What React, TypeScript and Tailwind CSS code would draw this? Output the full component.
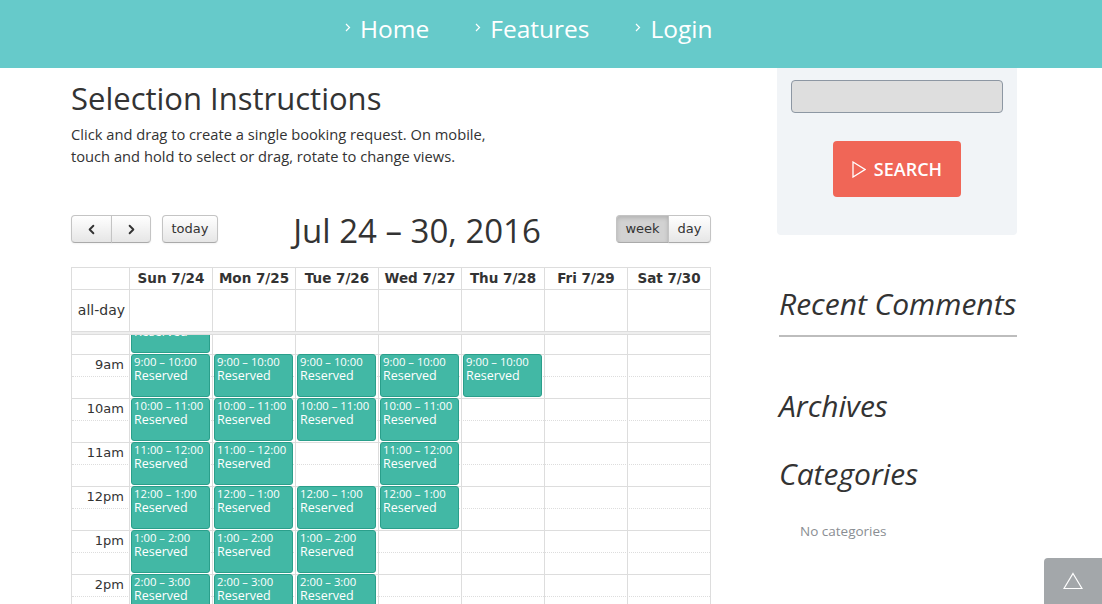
import React from "react";
import { ChevronLeft, ChevronRight } from "lucide-react";

const days = ["Sun 7/24", "Mon 7/25", "Tue 7/26", "Wed 7/27", "Thu 7/28", "Fri 7/29", "Sat 7/30"];
const events: number[][] = [
  [8, 9, 10, 11, 12, 13, 14],
  [9, 10, 11, 12, 13, 14],
  [9, 10, 12, 13, 14],
  [9, 10, 11, 12],
  [9],
  [],
  [],
];
const hours = [8, 9, 10, 11, 12, 13, 14, 15, 16, 17];

const h12 = (h: number) => (h > 12 ? h - 12 : h);
const hourLabel = (h: number) => (h < 12 ? `${h}am` : `${h12(h)}pm`);

function NavItem({ label }: { label: string }) {
  return (
    <div className="flex items-center h-[24px]">
      <svg width="6" height="9" viewBox="0 0 6 9" className="-translate-y-[2px] mr-[9px]">
        <polyline points="1,1 4.5,4.5 1,8" fill="none" stroke="white" strokeWidth="1.2" />
      </svg>
      <span className="text-[24.5px] leading-[24px] text-white">{label}</span>
    </div>
  );
}

const btn =
  "h-[28px] flex items-center justify-center border border-[#c4c4c4] border-b-[#aaaaaa] bg-gradient-to-b from-[#ffffff] to-[#e6e6e6] text-[#333] text-[13px] font-['DejaVu_Sans',sans-serif] shadow-[inset_0_1px_0_rgba(255,255,255,0.2),0_1px_2px_rgba(0,0,0,0.05)]";

export default function App() {
  return (
    <div className="min-h-screen bg-white font-['Open_Sans',sans-serif] text-[#333]">
      <header className="h-[68px] bg-[#66caca] flex items-start gap-[46px] pl-[345px] pt-[17px]">
        <NavItem label="Home" />
        <NavItem label="Features" />
        <NavItem label="Login" />
      </header>

      <div className="flex pl-[71px]">
        <main className="w-[640px]">
          <h1 className="mt-[12px] text-[31px] leading-[36px] font-normal text-[#333]">Selection Instructions</h1>
          <p className="mt-[7px] text-[14.7px] leading-[22px] text-[#333]">
            Click and drag to create a single booking request. On mobile,
            <br />
            touch and hold to select or drag, rotate to change views.
          </p>

          <div className="mt-[48px] flex items-start h-[28px]">
            <div className="flex items-start">
              <div className="flex">
                <button className={`${btn} w-[41px] rounded-l-[4px]`}>
                  <ChevronLeft size={15} strokeWidth={3} />
                </button>
                <button className={`${btn} w-[40px] -ml-px rounded-r-[4px]`}>
                  <ChevronRight size={15} strokeWidth={3} />
                </button>
              </div>
              <button className={`${btn} w-[56px] ml-[11px] rounded-[4px]`}>today</button>
            </div>
            <div className="flex-1 h-[28px] pt-[2px] text-center text-[33px] leading-[28px] text-[#333] whitespace-nowrap">
              Jul 24 – 30, 2016
            </div>
            <div className="flex">
              <button className={`${btn} w-[53px] rounded-l-[4px] !bg-none bg-[#d2d2d2] shadow-[inset_0_2px_4px_rgba(0,0,0,0.15)]`}>week</button>
              <button className={`${btn} w-[43px] -ml-px rounded-r-[4px]`}>day</button>
            </div>
          </div>

          <div className="mt-[24px] border border-[#dddddd] border-b-0 font-['DejaVu_Sans',sans-serif] text-[#333]">
            <div className="grid grid-cols-[57px_repeat(7,1fr)] h-[22px] border-b border-[#dddddd]">
              <div />
              {days.map((d) => (
                <div key={d} className="border-l border-[#dddddd] text-center text-[13.5px] font-bold leading-[21px]">
                  {d}
                </div>
              ))}
            </div>
            <div className="grid grid-cols-[57px_repeat(7,1fr)] h-[41px]">
              <div className="text-right pr-[4px] text-[14px] leading-[41px]">all-day</div>
              {days.map((d) => (
                <div key={d} className="border-l border-[#dddddd]" />
              ))}
            </div>
            <div className="h-[4px] bg-[#eeeeee] border-y border-[#dddddd]" />

            <div className="relative h-[400px] overflow-hidden">
              <div className="relative -mt-[25px]">
                {hours.map((h) => (
                  <React.Fragment key={h}>
                    <div className="h-[22px] border-t border-[#dddddd] flex">
                      <div className="w-[57px] text-right pr-[5px] text-[13px] leading-[20px]">{h >= 9 ? hourLabel(h) : ""}</div>
                    </div>
                    <div className="h-[22px] border-t border-dotted border-[#dddddd]" />
                  </React.Fragment>
                ))}
                <div className="absolute inset-0 grid grid-cols-[57px_repeat(7,1fr)]">
                  <div />
                  {events.map((col, i) => (
                    <div key={i} className="relative border-l border-[#dddddd]">
                      {col.map((h) => (
                        <div
                          key={h}
                          className="absolute left-[1px] right-[2px] h-[43px] bg-[#42b8a5] border border-[#2a9f8b] rounded-[3px] px-[2px] text-white font-['Open_Sans',sans-serif] overflow-hidden"
                          style={{ top: (h - 8) * 44 }}
                        >
                          <div className="text-[11.3px] leading-[13px] whitespace-nowrap">
                            {h12(h)}:00 – {h12(h + 1)}:00
                          </div>
                          <div className="text-[12.5px] leading-[16px]">Reserved</div>
                        </div>
                      ))}
                    </div>
                  ))}
                </div>
              </div>
            </div>
          </div>
        </main>

        <aside className="ml-[66px] w-[240px]">
          <div className="bg-[#f1f4f7] rounded-b-[4px] pt-[12px] pb-[38px] px-[14px]">
            <div className="h-[33px] bg-[#dedede] border border-[#8d97a3] rounded-[4px]" />
            <button className="mt-[28px] mx-auto flex items-center justify-center gap-[8px] w-[128px] h-[56px] bg-[#f06657] rounded-[4px] text-white text-[18px] font-semibold">
              <svg width="14" height="17" viewBox="0 0 14 17">
                <polygon points="1,1 13,8.5 1,16" fill="none" stroke="white" strokeWidth="1.3" />
              </svg>
              SEARCH
            </button>
          </div>

          <div className="ml-[2px]">
            <h2 className="mt-[51px] pb-[13px] border-b-2 border-[#bdbdbd] text-[30px] leading-[36px] italic text-[#333] whitespace-nowrap">Recent Comments</h2>
            <h2 className="mt-[51px] text-[30px] leading-[36px] italic text-[#333]">Archives</h2>
            <h2 className="mt-[32px] text-[30px] leading-[36px] italic text-[#333]">Categories</h2>
            <p className="mt-[29px] pl-[21px] text-[13.5px] leading-[20px] text-[#8a8e93]">No categories</p>
          </div>
        </aside>
      </div>

      <div className="fixed bottom-0 right-0 w-[58px] h-[46px] bg-[#a3a7aa] rounded-tl-[4px] flex items-center justify-center">
        <svg width="20" height="18" viewBox="0 0 20 18">
          <polygon points="10,1.5 19,16.5 1,16.5" fill="none" stroke="white" strokeWidth="1.2" />
        </svg>
      </div>
    </div>
  );
}
